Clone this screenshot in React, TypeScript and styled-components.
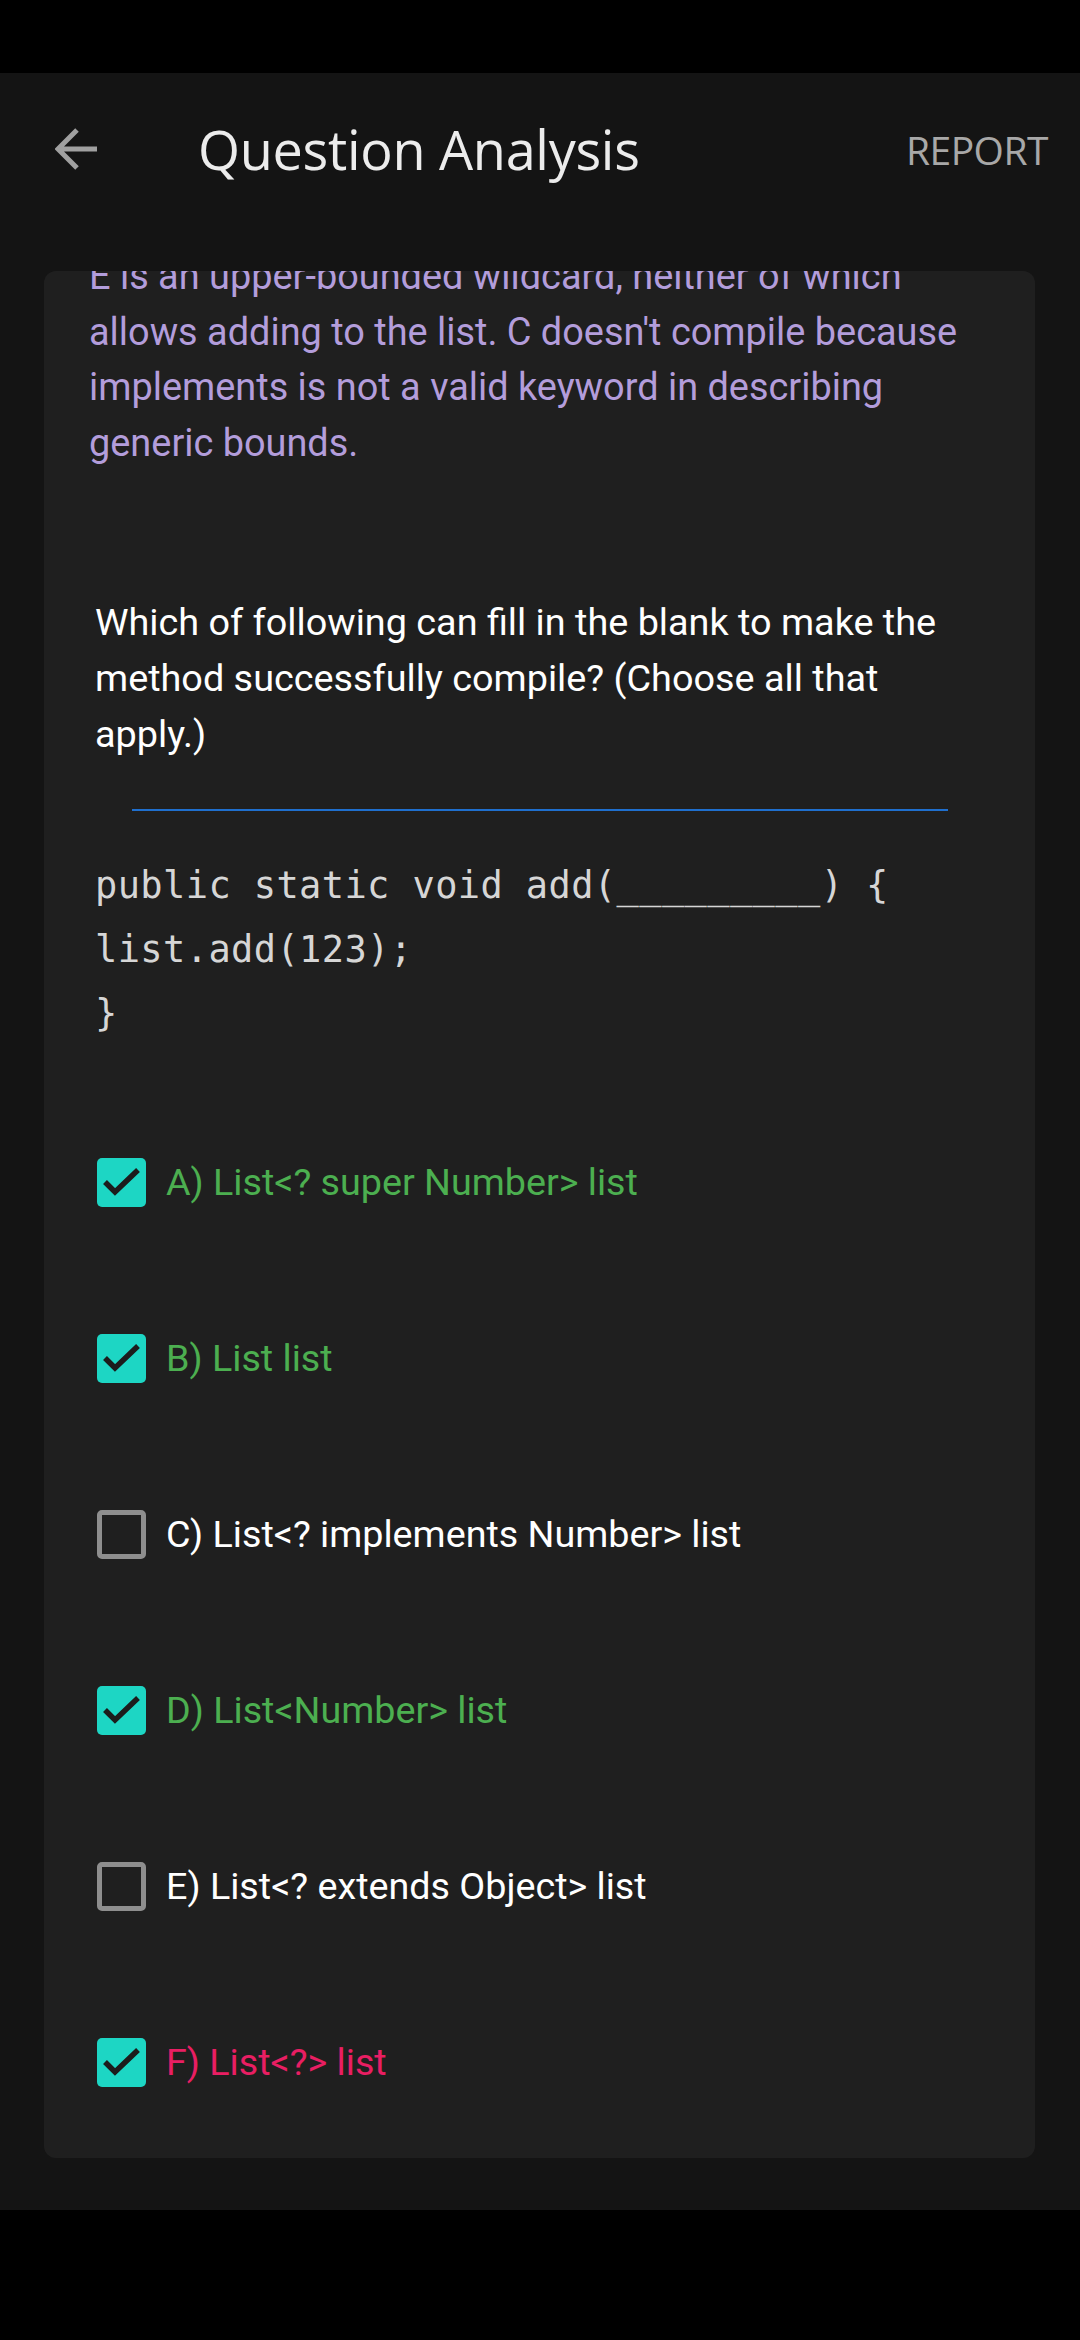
import styled, { createGlobalStyle } from 'styled-components';

const GlobalStyle = createGlobalStyle`
  html, body {
    margin: 0;
    padding: 0;
    background: #000;
  }
  * {
    box-sizing: border-box;
  }
`;

const Screen = styled.div`
  width: 1080px;
  height: 2340px;
  display: flex;
  flex-direction: column;
  background: #000;
  font-family: Roboto, 'Liberation Sans', sans-serif;
  overflow: hidden;
`;

const StatusBar = styled.div`
  height: 73px;
  flex: none;
  background: #000;
`;

const AppBar = styled.header`
  height: 152px;
  flex: none;
  display: flex;
  align-items: center;
  padding: 0 32px 0 55px;
  background: #141414;
`;

const BackIcon = styled.svg`
  width: 44px;
  height: 44px;
  flex: none;
`;

const Title = styled.h1`
  margin: 0 0 0 99px;
  flex: 1;
  font-family: 'Open Sans', Roboto, sans-serif;
  font-weight: 400;
  font-size: 54px;
  color: #ececec;
  letter-spacing: -0.3px;
`;

const ReportButton = styled.span`
  font-family: 'Open Sans', Roboto, sans-serif;
  font-size: 39px;
  color: #a8a8a8;
  letter-spacing: -0.5px;
`;

const Content = styled.main`
  flex: 1;
  background: #141414;
  padding: 46px 45px 52px 44px;
`;

const Card = styled.section`
  height: 1887px;
  background: #1f1f1f;
  border-radius: 12px;
  overflow: hidden;
  display: flex;
  flex-direction: column;
`;

const Explanation = styled.p`
  margin: -22px 0 0;
  padding: 0 20px 0 45px;
  font-size: 37.9px;
  line-height: 55.5px;
  color: #b39ddb;
  white-space: nowrap;
`;

const Question = styled.p`
  margin: 123px 0 0;
  padding: 0 20px 0 51px;
  font-size: 37.8px;
  line-height: 56px;
  color: #ffffff;
  white-space: nowrap;
`;

const Divider = styled.hr`
  align-self: center;
  width: 816px;
  height: 2px;
  margin: 47px 0 0;
  border: none;
  background: #1f6fce;
`;

const Code = styled.pre`
  margin: 43px 0 0;
  padding: 0 51px;
  font-family: 'DejaVu Sans Mono', 'Liberation Mono', monospace;
  font-size: 37px;
  line-height: 64px;
  color: #d6d6d6;
  letter-spacing: 0.4px;
`;

const Options = styled.ul`
  list-style: none;
  margin: 111px 0 0;
  padding: 0 0 0 53px;
  display: flex;
  flex-direction: column;
  gap: 126px;
`;

const Option = styled.li<{ $color: string }>`
  display: flex;
  align-items: center;
  height: 50px;
  gap: 20px;
  font-size: 37.7px;
  color: ${(p) => p.$color};
`;

const Box = styled.span<{ $checked: boolean }>`
  width: 49px;
  height: 49px;
  flex: none;
  border-radius: 5px;
  display: flex;
  align-items: center;
  justify-content: center;
  background: ${(p) => (p.$checked ? '#1dd6c4' : 'transparent')};
  border: ${(p) => (p.$checked ? 'none' : '5px solid #8e8e8e')};
`;

const NavBar = styled.div`
  height: 130px;
  flex: none;
  background: #000;
`;

const options = [
  { label: 'A) List<? super Number> list', checked: true, color: '#4caf50' },
  { label: 'B) List list', checked: true, color: '#4caf50' },
  { label: 'C) List<? implements Number> list', checked: false, color: '#ffffff' },
  { label: 'D) List<Number> list', checked: true, color: '#4caf50' },
  { label: 'E) List<? extends Object> list', checked: false, color: '#ffffff' },
  { label: 'F) List<?> list', checked: true, color: '#e91e63' },
];

const Check = () => (
  <svg width='49' height='49' viewBox='0 0 49 49'>
    <polyline
      points='8,24 18,34 41,12'
      fill='none'
      stroke='#1c1c1c'
      strokeWidth='5.5'
    />
  </svg>
);

const App = () => {
  return (
    <>
      <GlobalStyle />
      <Screen>
        <StatusBar />
        <AppBar>
          <BackIcon viewBox='0 0 44 44'>
            <path
              d='M42 22H5M22 3L3 22l19 19'
              fill='none'
              stroke='#a0a0a0'
              strokeWidth='5'
            />
          </BackIcon>
          <Title>Question Analysis</Title>
          <ReportButton>REPORT</ReportButton>
        </AppBar>
        <Content>
          <Card>
            <Explanation>
              E is an upper-bounded wildcard, neither of which
              <br />
              allows adding to the list. C doesn't compile because
              <br />
              implements is not a valid keyword in describing
              <br />
              generic bounds.
            </Explanation>
            <Question>
              Which of following can fill in the blank to make the
              <br />
              method successfully compile? (Choose all that
              <br />
              apply.)
            </Question>
            <Divider />
            <Code>
              {'public static void add(_________) {\nlist.add(123);\n}'}
            </Code>
            <Options>
              {options.map((o) => (
                <Option key={o.label} $color={o.color}>
                  <Box $checked={o.checked}>{o.checked && <Check />}</Box>
                  {o.label}
                </Option>
              ))}
            </Options>
          </Card>
        </Content>
        <NavBar />
      </Screen>
    </>
  );
};

export default App;
